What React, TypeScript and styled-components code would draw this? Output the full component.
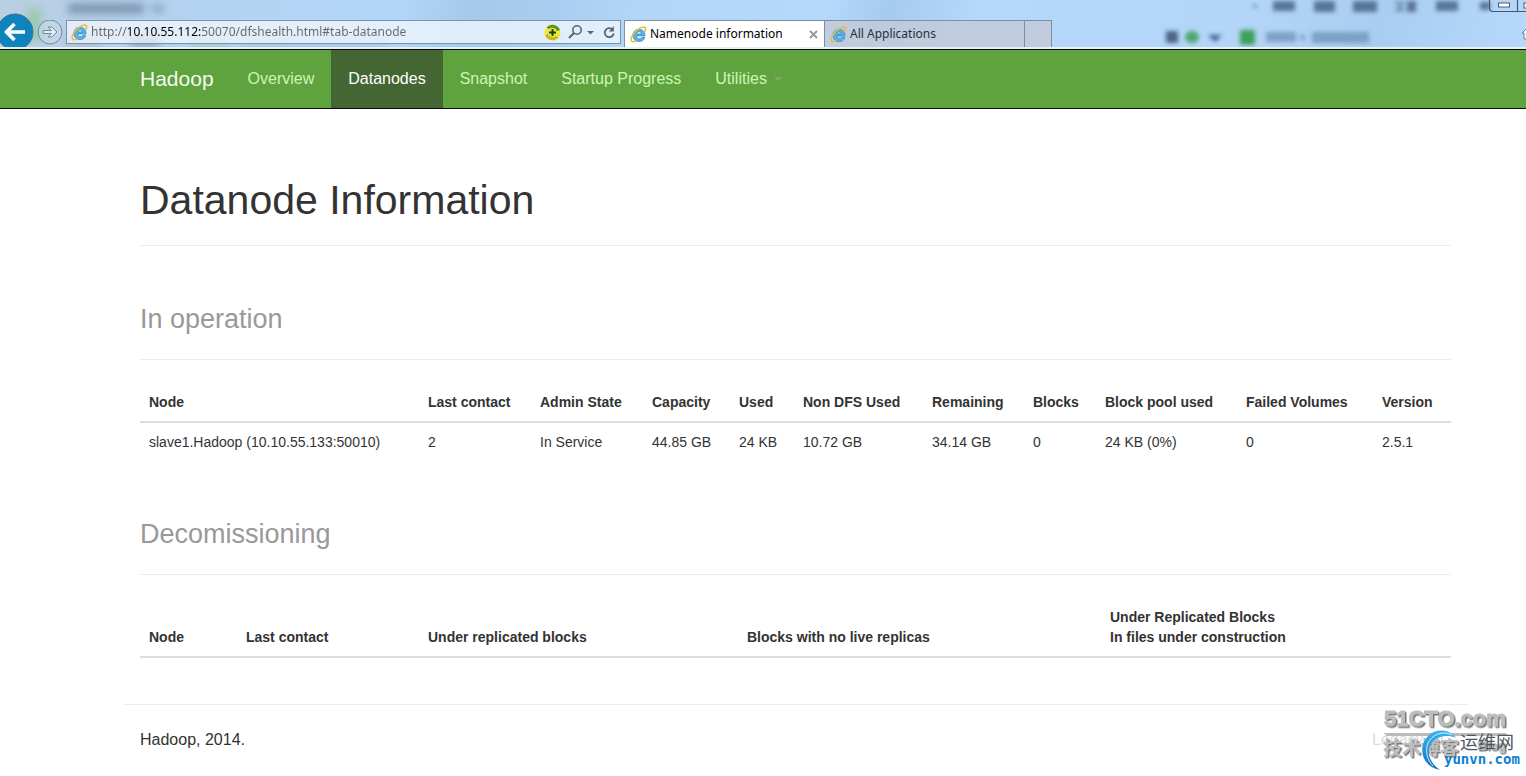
import React from "react";
import styled, { createGlobalStyle, css } from "styled-components";

const GlobalStyle = createGlobalStyle`
  * { box-sizing: border-box; }
  body {
    margin: 0;
    background: #fff;
    color: #333;
    font-family: "Liberation Sans", Arial, sans-serif;
    font-size: 16px;
    line-height: 23px;
  }
`;

const uiFont = `"Noto Sans", "Open Sans", "Noto Sans CJK SC", sans-serif`;

/* ---------- browser window ---------- */

const Chrome = styled.header`
  position: relative;
  overflow: hidden;
  display: flex;
  align-items: flex-start;
  height: 49px;
  padding-top: 20px;
  background: linear-gradient(
    100deg,
    #b9cfe2 0,
    #b4d2f0 12%,
    #b3d6f8 26%,
    #a6c9ea 31%,
    #a9cdf0 36%,
    #b3d6f8 42%,
    #b5d8fb 54%,
    #a5cbee 58%,
    #b5d8fb 64%,
    #b3d5f7 82%,
    #a9cdf0 90%,
    #b5d8fb 100%
  );
  border-bottom: 2px solid #e3f0f8;
  font-family: ${uiFont};
  font-size: 12px;
`;

const Glass = styled.svg<{ $side: "left" | "right" }>`
  position: absolute;
  top: 0;
  ${(p) => (p.$side === "left" ? "left: 0;" : "right: 0;")}
`;

const BackButton = styled.button`
  position: relative;
  flex: none;
  width: 34px;
  height: 27px;
  margin: 0;
  padding: 0;
  border: 0;
  background: none;
  svg {
    position: absolute;
    left: 0;
    top: -8px;
  }
`;

const ForwardButton = styled.button`
  position: relative;
  flex: none;
  display: flex;
  margin: 0 3px 0 3px;
  padding: 0;
  border: 0;
  background: none;
`;

const AddressBar = styled.form`
  position: relative;
  display: flex;
  align-items: center;
  flex: 0 1 555px;
  height: 24px;
  padding: 0 4px;
  border: 1px solid #7b93ab;
  background: rgba(245, 250, 255, 0.72);
`;

const Url = styled.input`
  flex: 1;
  min-width: 0;
  height: 22px;
  margin: 0 0 0 3px;
  padding: 0;
  border: 0;
  outline: 0;
  font: 12px/22px ${uiFont};
  color: transparent;
  background-image: linear-gradient(90deg, #666 0 37px, #000 37px 111px, #666 111px);
  background-clip: text;
  -webkit-background-clip: text;
`;

const BarButton = styled.button`
  display: flex;
  margin: 0 0 0 6px;
  padding: 0;
  border: 0;
  background: none;
`;

const Tabs = styled.nav`
  position: relative;
  display: flex;
  align-items: flex-start;
  margin-left: 3px;
  border-left: 1px solid #7b93ab;
`;

const Tab = styled.div<{ $active?: boolean }>`
  display: flex;
  align-items: center;
  width: 200px;
  height: 27px;
  padding: 0 5px;
  border: 1px solid #7b8fa3;
  border-width: 1px 1px 0 0;
  background: ${(p) => (p.$active ? "#fff" : "rgba(196, 203, 215, 0.8)")};
  a {
    flex: 1;
    margin-left: 3px;
    color: ${(p) => (p.$active ? "#000" : "#26303c")};
    font-size: 12px;
    line-height: 20px;
    text-decoration: none;
    white-space: nowrap;
  }
  button {
    display: flex;
    padding: 0;
    border: 0;
    background: none;
  }
`;

const NewTab = styled.button`
  width: 27px;
  height: 27px;
  padding: 0;
  border: 1px solid #7b8fa3;
  border-width: 1px 1px 0 0;
  background: rgba(196, 203, 215, 0.8);
`;

const EdgeIcons = styled.svg`
  position: absolute;
  right: 0;
  top: 0;
`;

function IeIcon() {
  return (
    <svg width="17" height="17" viewBox="0 0 34 34" aria-hidden="true">
      <path
        d="M30 20H13c.4 4 2.700 5.500 5.800 5.500 2.300 0 3.900-.9 4.900-2.500h5.800c-1.700 5.400-5.600 8-11 8C11 31 6 26 6 18.500S11 6.500 18.300 6.500C25.500 6.500 30.300 12 30 20zM13.100 15.800h9.700c-.3-3-2.200-4.300-4.700-4.300s-4.400 1.400-5 4.300z"
        fill="#55b4e8"
        stroke="#2b7fb8"
        strokeWidth="1.400"
      />
      <path
        d="M29 11c3-5 3.200-7.500.4-8.600C22 .5 8 11 4 20.500 0 29 3.500 34 11 30"
        fill="none"
        stroke="#e8bd3e"
        strokeWidth="3"
        strokeLinecap="round"
      />
    </svg>
  );
}

function BrowserChrome() {
  return (
    <Chrome>
      <Glass $side="left" width="420" height="47" aria-hidden="true">
        <defs>
          <filter id="soft" x="-20%" y="-50%" width="140%" height="200%">
            <feGaussianBlur stdDeviation="4" />
          </filter>
        </defs>
        <g filter="url(#soft)">
          <rect x="26" y="8" width="16" height="34" fill="#93c79c" opacity=".7" />
          <rect x="68" y="4" width="76" height="9" fill="#5f7791" opacity=".75" />
          <rect x="152" y="5" width="12" height="7" fill="#5f7791" opacity=".6" />
          <rect x="66" y="38" width="34" height="7" fill="#8d9dad" opacity=".6" />
          <rect x="130" y="37" width="30" height="8" fill="#52677d" opacity=".6" />
          <rect x="190" y="39" width="40" height="6" fill="#7fbf88" opacity=".6" />
          <rect x="240" y="38" width="150" height="7" fill="#8fa9c4" opacity=".5" />
        </g>
      </Glass>
      <Glass $side="right" width="386" height="47" aria-hidden="true">
        <defs>
          <filter id="soft2" x="-20%" y="-50%" width="140%" height="200%">
            <feGaussianBlur stdDeviation="2" />
          </filter>
        </defs>
        <g filter="url(#soft2)">
          <circle cx="115" cy="6" r="2" fill="#6d87a5" />
          <g fill="#4b6685" opacity=".85">
            <rect x="133" y="1" width="22" height="10" />
            <rect x="174" y="1" width="21" height="11" />
            <rect x="213" y="1" width="24" height="11" />
            <path d="M255 2h10v2h-4v5h4v2h-10v-2h4V4h-4zM267 1h9v11h-9z" />
            <rect x="296" y="1" width="22" height="10" />
            <rect x="340" y="2" width="10" height="8" />
          </g>
          <rect x="26" y="31" width="12" height="12" fill="#4d6585" />
          <ellipse cx="52" cy="37" rx="7" ry="6" fill="#4fa56f" />
          <path d="M68 35h14l-7 7z" fill="#3e6290" />
          <rect x="100" y="30" width="15" height="15" rx="2" fill="#3f9e5c" />
          <g fill="#6a8cb2" opacity=".7">
            <rect x="126" y="32" width="30" height="10" />
            <rect x="160" y="35" width="5" height="5" />
            <rect x="172" y="32" width="57" height="11" />
          </g>
        </g>
      </Glass>
      <BackButton type="button" aria-label="Back">
        <svg width="34" height="35" viewBox="0 0 34 35">
          <circle cx="15" cy="20" r="18" fill="#0f83bd" stroke="#4d6f8c" strokeWidth="1" />
          <path d="M25 20H7M14.500 12L6.500 20l8 8" fill="none" stroke="#fff" strokeWidth="3.600" />
        </svg>
      </BackButton>
      <ForwardButton type="button" aria-label="Forward">
        <svg width="26" height="26" viewBox="0 0 26 26">
          <circle cx="13" cy="12" r="12" fill="#c9dbea" fillOpacity=".5" stroke="#71879c" />
          <path
            d="M6 10.500h8.500L11 7h3.500l5.500 5-5.500 5H11l3.500-3.500H6z"
            fill="#e3edf5"
            stroke="#71879c"
          />
        </svg>
      </ForwardButton>
      <AddressBar onSubmit={(e) => e.preventDefault()}>
        <IeIcon />
        <Url
          aria-label="Address"
          defaultValue="http://10.10.55.112:50070/dfshealth.html#tab-datanode"
        />
        <BarButton type="button" aria-label="Compatibility">
          <svg width="17" height="17" viewBox="0 0 17 17">
            <circle cx="8.500" cy="8.500" r="8" fill="#f3e63c" />
            <path d="M2.500 3.500A8 8 0 0 1 16 6l-3 1a5 5 0 0 0-8-2z" fill="#5e8f2c" />
            <path d="M14.500 13.500A8 8 0 0 1 1 11l3-1a5 5 0 0 0 8 2z" fill="#c3b92c" />
            <path d="M8.500 5v7M5 8.500h7" stroke="#0e4a16" strokeWidth="2" />
          </svg>
        </BarButton>
        <BarButton type="button" aria-label="Search">
          <svg width="30" height="16" viewBox="0 0 30 16">
            <circle cx="10" cy="6" r="4.200" fill="none" stroke="#5b6672" strokeWidth="1.600" />
            <path d="M7 9L2 14" stroke="#5b6672" strokeWidth="2.200" />
            <path d="M20 7h7l-3.500 3.500z" fill="#5b6672" />
          </svg>
        </BarButton>
        <BarButton type="button" aria-label="Refresh">
          <svg width="13" height="15" viewBox="0 0 13 15">
            <path
              d="M9.500 4.500A4.500 4.500 0 1 0 10.700 8.500"
              fill="none"
              stroke="#5b6672"
              strokeWidth="1.800"
            />
            <path d="M10.800 1v5.500H5.800z" fill="#5b6672" />
          </svg>
        </BarButton>
      </AddressBar>
      <Tabs aria-label="Open tabs">
        <Tab $active>
          <IeIcon />
          <a href="#tab-datanode">Namenode information</a>
          <button type="button" aria-label="Close tab">
            <svg width="11" height="11" viewBox="0 0 11 11">
              <path d="M2 2l7 7M9 2L2 9" stroke="#9a9a9a" strokeWidth="2" />
            </svg>
          </button>
        </Tab>
        <Tab>
          <IeIcon />
          <a href="#applications">All Applications</a>
        </Tab>
        <NewTab type="button" aria-label="New tab" />
      </Tabs>
      <EdgeIcons width="40" height="47" viewBox="0 0 40 47" aria-hidden="true">
        <path
          d="M3.500-2V8q0 3.500 3.500 3.500h34M31.500 0v11"
          fill="none"
          stroke="#46586e"
          strokeWidth="1.200"
        />
        <rect x="12.500" y="3" width="11" height="4" fill="#fff" stroke="#46586e" />
        <path d="M41 28l-5 5h2v6h4" fill="#f4f8fb" stroke="#6c7f92" />
        <rect x="38" y="3" width="4" height="5" fill="#fff" stroke="#46586e" />
      </EdgeIcons>
    </Chrome>
  );
}

/* ---------- Hadoop page ---------- */

const Navbar = styled.nav`
  display: flex;
  height: 60px;
  padding-left: 123px;
  border: 1px solid #080808;
  border-width: 1px 0;
  background: #5fa33e;
`;

const navLink = css`
  display: flex;
  align-items: center;
  height: 58px;
  padding: 0 17px 2px;
  text-decoration: none;
  white-space: nowrap;
`;

const Brand = styled.a`
  ${navLink}
  color: #f3fbee;
  font-size: 21px;
`;

const NavLink = styled.a<{ $active?: boolean }>`
  ${navLink}
  color: ${(p) => (p.$active ? "#fff" : "#cdf5b8")};
  background: ${(p) => (p.$active ? "#446633" : "transparent")};
`;

const Caret = styled.span`
  margin: 2px 0 0 7px;
  border: 4px solid transparent;
  border-top-color: #84a274;
  border-bottom: 0;
`;

const Main = styled.main`
  padding: 68px 75px 0 140px;
`;

const Title = styled.h1`
  margin: 0;
  padding-bottom: 22px;
  border-bottom: 1px solid #eee;
  font-size: 41px;
  font-weight: 400;
  line-height: 46px;
`;

const SectionTitle = styled.h2`
  margin: 58px 0 23px;
  padding-bottom: 25px;
  border-bottom: 1px solid #eee;
  color: #999;
  font-size: 27px;
  font-weight: 400;
  line-height: 30px;
`;

const Table = styled.table`
  width: 100%;
  table-layout: fixed;
  border-collapse: separate;
  border-spacing: 0;
  font-size: 14px;
  line-height: 20px;
  text-align: left;
  white-space: nowrap;
  th,
  td {
    padding: 9px;
    vertical-align: bottom;
  }
  th {
    border-bottom: 2px solid #ddd;
    font-weight: 700;
  }
`;

const Footer = styled.footer`
  position: relative;
  display: flex;
  justify-content: space-between;
  margin: 46px 58px 0 123px;
  padding: 23px 24px 24px 17px;
  border-top: 1px solid #eee;
`;

const LegacyLink = styled.a`
  color: #ddd;
  text-decoration: none;
`;

const Watermark = styled.svg`
  position: absolute;
  right: -58px;
  top: -4px;
`;

type Column = { label: React.ReactNode; width: number };

const liveColumns: Column[] = [
  { label: "Node", width: 279 },
  { label: "Last contact", width: 112 },
  { label: "Admin State", width: 112 },
  { label: "Capacity", width: 87 },
  { label: "Used", width: 64 },
  { label: "Non DFS Used", width: 129 },
  { label: "Remaining", width: 101 },
  { label: "Blocks", width: 72 },
  { label: "Block pool used", width: 141 },
  { label: "Failed Volumes", width: 136 },
  { label: "Version", width: 78 },
];

const liveNodes = [
  [
    "slave1.Hadoop (10.10.55.133:50010)",
    "2",
    "In Service",
    "44.85 GB",
    "24 KB",
    "10.72 GB",
    "34.14 GB",
    "0",
    "24 KB (0%)",
    "0",
    "2.5.1",
  ],
];

const leavingColumns: Column[] = [
  { label: "Node", width: 97 },
  { label: "Last contact", width: 182 },
  { label: "Under replicated blocks", width: 319 },
  { label: "Blocks with no live replicas", width: 363 },
  {
    label: (
      <>
        Under Replicated Blocks
        <br />
        In files under construction
      </>
    ),
    width: 350,
  },
];

function NodeTable({ columns, rows }: { columns: Column[]; rows: string[][] }) {
  return (
    <Table>
      <colgroup>
        {columns.map((c, i) => (
          <col key={i} width={c.width} />
        ))}
      </colgroup>
      <thead>
        <tr>
          {columns.map((c, i) => (
            <th key={i} scope="col">
              {c.label}
            </th>
          ))}
        </tr>
      </thead>
      <tbody>
        {rows.map((row) => (
          <tr key={row[0]}>
            {row.map((cell, i) => (
              <td key={i}>{cell}</td>
            ))}
          </tr>
        ))}
      </tbody>
    </Table>
  );
}

function BlogMark() {
  const latin = `"Liberation Sans", Arial, sans-serif`;
  const cjk = `"Noto Sans CJK SC", sans-serif`;
  return (
    <Watermark width="150" height="76" viewBox="0 0 150 76">
      <defs>
        <filter id="drop" x="-10%" y="-10%" width="120%" height="130%">
          <feDropShadow dx="1.500" dy="1.500" stdDeviation="0.300" floodColor="#777" />
        </filter>
        <linearGradient id="swoosh" x1="0" y1="0" x2="0" y2="1">
          <stop offset="0" stopColor="#38b6ee" />
          <stop offset="1" stopColor="#0a6fc4" />
        </linearGradient>
      </defs>
      <g filter="url(#drop)" fill="#bdbdbd">
        <text
          x="8"
          y="25"
          fontFamily={latin}
          fontWeight="700"
          fontSize="22"
          stroke="#bdbdbd"
          strokeWidth="1"
        >
          51CTO.com
        </text>
        <rect x="8" y="32" width="122" height="1" />
        <text x="7" y="54" fontFamily={cjk} fontWeight="700" fontSize="19">
          技术博客
        </text>
        <text x="101" y="49" fontFamily={latin} fontWeight="700" fontSize="13">
          Blog
        </text>
      </g>
      <path
        d="M80 37C74 28 60 27 52 35C41 46 46 66 64 69C54 62 50 52 55 43C60 35 72 33 80 37z"
        fill="url(#swoosh)"
      />
      <path
        d="M76 34C66 29 56 34 52 42C49 50 51 59 57 65"
        fill="none"
        stroke="#fff"
        strokeWidth="1"
        opacity=".8"
      />
      <text x="84" y="48" fontFamily={cjk} fontSize="18" fill="#4d5560">
        运维网
      </text>
      <text
        x="68"
        y="63"
        fontFamily={`"DejaVu Sans Mono", monospace`}
        fontWeight="700"
        fontSize="14"
        fill="#0b7fd0"
      >
        yunvn.com
      </text>
    </Watermark>
  );
}

export default function App() {
  return (
    <>
      <GlobalStyle />
      <BrowserChrome />
      <Navbar>
        <Brand href="#hadoop">Hadoop</Brand>
        <NavLink href="#tab-overview">Overview</NavLink>
        <NavLink href="#tab-datanode" $active>
          Datanodes
        </NavLink>
        <NavLink href="#tab-snapshot">Snapshot</NavLink>
        <NavLink href="#tab-startup-progress">Startup Progress</NavLink>
        <NavLink href="#utilities">
          Utilities
          <Caret />
        </NavLink>
      </Navbar>
      <Main>
        <Title>Datanode Information</Title>
        <SectionTitle>In operation</SectionTitle>
        <NodeTable columns={liveColumns} rows={liveNodes} />
        <SectionTitle>Decomissioning</SectionTitle>
        <NodeTable columns={leavingColumns} rows={[]} />
      </Main>
      <Footer>
        <span>Hadoop, 2014.</span>
        <LegacyLink href="#legacy">Legacy UI</LegacyLink>
        <BlogMark />
      </Footer>
    </>
  );
}
